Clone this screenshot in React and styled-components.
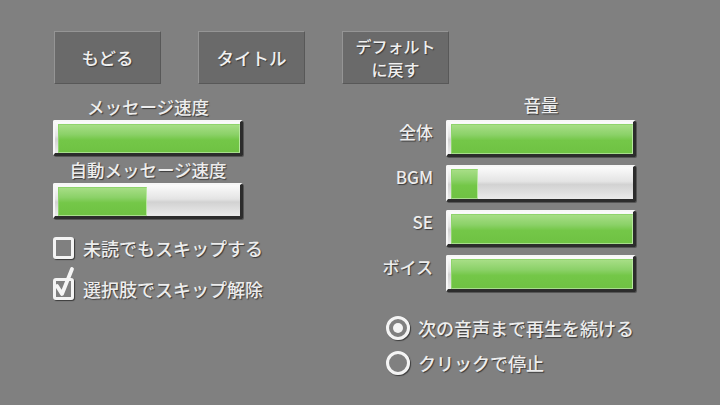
import React from 'react';
import styled, { createGlobalStyle } from 'styled-components';

const GlobalStyle = createGlobalStyle`
  html, body {
    margin: 0;
    padding: 0;
    background: #808080;
  }
  * {
    box-sizing: border-box;
  }
`;

const Screen = styled.div`
  width: 720px;
  height: 405px;
  overflow: hidden;
  background: #808080;
  font-family: "Noto Sans CJK JP", "Noto Sans", sans-serif;
  font-weight: 500;
  color: #ededed;
  padding: 31px 0 0 53px;
`;

const TopBar = styled.div`
  display: flex;
  gap: 37px;
  padding-left: 1px;
`;

const MenuButton = styled.button`
  width: 107px;
  height: 53px;
  background: #6a6a6a;
  border: 1px solid;
  border-color: #959595 #585858 #585858 #959595;
  color: #f0f0f0;
  font-family: inherit;
  font-weight: inherit;
  font-size: ${(p) => (p.$small ? '16px' : '17.5px')};
  line-height: ${(p) => (p.$small ? '23px' : '1')};
  text-shadow: 1px 1px 1px #3a3a3a;
  display: flex;
  align-items: center;
  justify-content: center;
  padding: 0;
  cursor: pointer;
`;

const Body = styled.div`
  display: flex;
  gap: 130px;
  margin-top: 12px;
`;

const LeftColumn = styled.div`
  width: 190px;
  display: flex;
  flex-direction: column;
`;

const Label = styled.div`
  font-size: 17.5px;
  line-height: 22px;
  text-align: center;
  text-shadow: 1px 1px 1px #3a3a3a;
  margin-top: ${(p) => p.$top || 0}px;
  margin-bottom: 2px;
  white-space: nowrap;
`;

const Track = styled.div`
  width: ${(p) => p.$w || 190}px;
  height: ${(p) => p.$h || 36}px;
  border-style: solid;
  border-width: 2px 3px 3px 2px;
  border-color: #f7f7f7 #2c2c2c #2c2c2c #f7f7f7;
  border-radius: 2px;
  background: linear-gradient(#fbfbfb 0%, #e4e4e4 45%, #d2d2d2 55%, #ebebeb 100%);
  padding: 2px 0 0 3px;
  box-shadow: 1px 1px 0 #555;
`;

const Fill = styled.div`
  height: 100%;
  background: linear-gradient(#a7de86 0%, #8bd168 35%, #74c748 55%, #6fc243 100%);
  border: 1px solid #8fd46c;
  border-right-color: #b8e8a0;
  border-bottom-color: #a8de8c;
`;

const CheckList = styled.div`
  display: flex;
  flex-direction: column;
  gap: 15px;
  margin-top: 16px;
`;

const OptionRow = styled.label`
  display: flex;
  align-items: center;
  gap: ${(p) => p.$gap || 9}px;
  height: 26px;
  font-size: 18px;
  text-shadow: 1px 1px 1px #3a3a3a;
  white-space: nowrap;
  cursor: pointer;
`;

const Box = styled.span`
  position: relative;
  width: 21px;
  height: 22px;
  border: 3px solid #f4f4f4;
  border-radius: 3px;
  flex: none;
  box-shadow: 1px 1px 1px #3a3a3a;
`;

const CheckMark = styled.svg`
  position: absolute;
  left: -1px;
  top: -13px;
  width: 20px;
  height: 29px;
  overflow: visible;
`;

const RightColumn = styled.div`
  display: flex;
  flex-direction: column;
  margin-top: -2px;
`;

const VolumeHeading = styled(Label)`
  padding-left: 73px;
  margin-bottom: 4px;
`;

const VolumeGrid = styled.div`
  display: grid;
  grid-template-columns: 60px 190px;
  column-gap: 13px;
  row-gap: 8px;
`;

const RowLabel = styled.div`
  text-align: right;
  font-size: 17px;
  line-height: 24px;
  text-shadow: 1px 1px 1px #3a3a3a;
  white-space: nowrap;
`;

const RadioList = styled.div`
  display: flex;
  flex-direction: column;
  gap: 9px;
  margin-top: 23px;
  padding-left: 13px;
`;

const Radio = styled.span`
  width: 24px;
  height: 24px;
  border: 3px solid #f4f4f4;
  border-radius: 50%;
  flex: none;
  display: flex;
  align-items: center;
  justify-content: center;
  box-shadow: 1px 1px 1px #3a3a3a;

  &::after {
    content: '';
    width: 10px;
    height: 10px;
    border-radius: 50%;
    background: ${(p) => (p.$on ? '#f4f4f4' : 'transparent')};
  }
`;

const Slider = ({ value, h }) => (
  <Track $h={h}>
    <Fill style={{ width: `${value}%` }} />
  </Track>
);

const Checkbox = ({ checked, children }) => (
  <OptionRow>
    <Box>
      {checked && (
        <CheckMark viewBox="0 0 20 29">
          <path
            d="M2 18 L7 26 L17 1"
            fill="none"
            stroke="#f6f6f6"
            strokeWidth="3.8"
            strokeLinecap="round"
            strokeLinejoin="round"
          />
        </CheckMark>
      )}
    </Box>
    {children}
  </OptionRow>
);

const volumes = [
  { name: '全体', value: 100 },
  { name: 'BGM', value: 15 },
  { name: 'SE', value: 100 },
  { name: 'ボイス', value: 100 },
];

export default function App() {
  return (
    <>
      <GlobalStyle />
      <Screen>
        <TopBar>
          <MenuButton>もどる</MenuButton>
          <MenuButton>タイトル</MenuButton>
          <MenuButton $small>
            デフォルト
            <br />
            に戻す
          </MenuButton>
        </TopBar>

        <Body>
          <LeftColumn>
            <Label>メッセージ速度</Label>
            <Slider value={100} />
            <Label $top={3}>自動メッセージ速度</Label>
            <Slider value={49} />
            <CheckList>
              <Checkbox>未読でもスキップする</Checkbox>
              <Checkbox checked>選択肢でスキップ解除</Checkbox>
            </CheckList>
          </LeftColumn>

          <RightColumn>
            <VolumeHeading>音量</VolumeHeading>
            <VolumeGrid>
              {volumes.map((v) => (
                <React.Fragment key={v.name}>
                  <RowLabel>{v.name}</RowLabel>
                  <Slider value={v.value} h={37} />
                </React.Fragment>
              ))}
            </VolumeGrid>
            <RadioList>
              <OptionRow $gap={8}>
                <Radio $on />
                次の音声まで再生を続ける
              </OptionRow>
              <OptionRow $gap={8}>
                <Radio />
                クリックで停止
              </OptionRow>
            </RadioList>
          </RightColumn>
        </Body>
      </Screen>
    </>
  );
}
